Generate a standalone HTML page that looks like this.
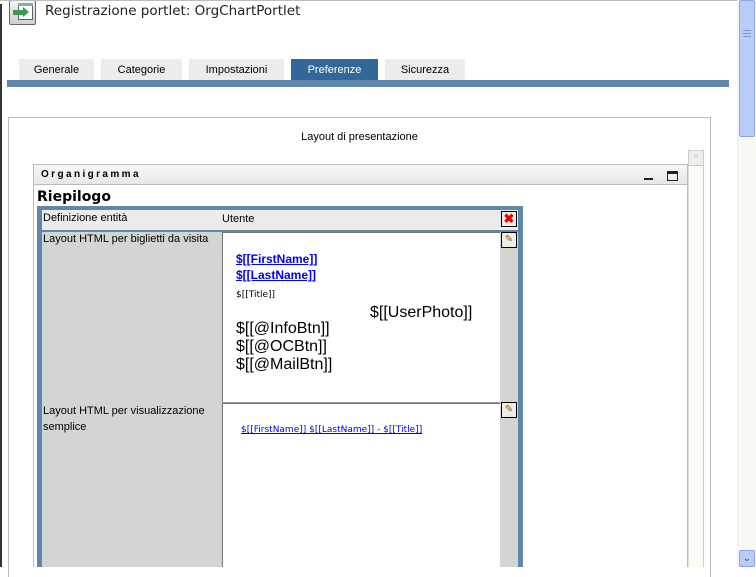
<!DOCTYPE html>
<html><head><meta charset="utf-8"><style>
*{margin:0;padding:0;box-sizing:border-box}
body{width:756px;height:567px;overflow:hidden;background:#fff;font-family:"Liberation Sans",sans-serif;position:relative}
.a{position:absolute}
.tab{position:absolute;top:59px;height:21px;background:#ececec;font-size:11px;color:#000;text-align:center;line-height:22px}
.ed{position:absolute;width:16px;height:16px;border:1px solid #000;background:#ecece8}
.lk{color:#0000ee;text-decoration:underline;font-family:"Liberation Sans",sans-serif}
.big{font-family:"Liberation Sans",sans-serif;font-size:16px;color:#000;position:absolute;line-height:18px}
</style></head><body>
<div class="a" style="left:0;top:4px;width:2px;height:563px;background:#333"></div>
<div class="a" style="left:9px;top:0;width:27px;height:25px;border:1px solid #666;border-radius:2px;background:linear-gradient(#f4f4f4,#cfcfcf)">
<div class="a" style="left:8px;top:2px;width:15px;height:17px;border:1px solid #567;background:#fff"></div>
<div class="a" style="left:8px;top:2px;width:15px;height:3px;background:#8aa"></div>
<div class="a" style="left:3px;top:9px;width:12px;height:5px;background:#3a9a4a"></div>
<div class="a" style="left:13px;top:6px;width:0;height:0;border-top:5px solid transparent;border-bottom:5px solid transparent;border-left:6px solid #3a9a4a"></div>
</div>
<div class="a" style="left:45px;top:3px;font-size:13.5px;color:#222;font-family:'DejaVu Sans',sans-serif">Registrazione portlet: OrgChartPortlet</div>
<div class="a" style="left:0;top:0;width:740px;height:1px;background:#bbb"></div>
<div class="tab" style="left:19px;width:75px">Generale</div>
<div class="tab" style="left:101px;width:81px">Categorie</div>
<div class="tab" style="left:189px;width:95px">Impostazioni</div>
<div class="tab" style="left:291px;width:87px;background:#336699;color:#fff">Preferenze</div>
<div class="tab" style="left:385px;width:80px">Sicurezza</div>
<div class="a" style="left:7px;top:80px;width:722px;height:7px;background:#5f86ab"></div>
<div class="a" style="left:737px;top:0;width:19px;height:567px;background:#f8f8f4;border-left:1px solid #eee"></div>
<div class="a" style="left:739px;top:0;width:16px;height:137px;background:#b9ccf8;border:1px solid #8aa6e6;border-radius:2px"></div>
<div class="a" style="left:743px;top:30px;width:8px;height:7px;border-top:1px solid #7d95d8;border-bottom:1px solid #7d95d8"></div>
<div class="a" style="left:743px;top:33px;width:8px;height:1px;background:#7d95d8"></div>
<div class="a" style="left:739px;top:550px;width:16px;height:17px;background:#b9ccf8;border:1px solid #8aa6e6;border-radius:2px;font-size:10px;color:#445;text-align:center;line-height:15px">&#8964;</div>
<div class="a" style="left:8px;top:117px;width:703px;height:460px;border:1px solid #bbb;border-bottom:none"></div>
<div class="a" style="left:8px;top:131px;width:703px;text-align:center;font-size:11px;color:#000">Layout di presentazione</div>
<div class="a" style="left:688px;top:150px;width:16px;height:417px;background:#fbfbf6;border-left:1px solid #ddd;border-right:1px solid #ccc"></div>
<div class="a" style="left:688px;top:150px;width:16px;height:16px;background:#eeeeea;border:1px solid #ccc;color:#bbb;font-size:9px;text-align:center;line-height:14px">^</div>
<div class="a" style="left:33px;top:164px;width:655px;height:403px;border:1px solid #bbb;border-bottom:none"></div>
<div class="a" style="left:34px;top:165px;width:653px;height:20px;background:linear-gradient(#f8f8f8,#e6e7e6);border-bottom:1px solid #bbb"></div>
<div class="a" style="left:41px;top:169px;font-size:10px;font-weight:bold;letter-spacing:2.4px;font-family:'Liberation Sans',sans-serif">Organigramma</div>
<div class="a" style="left:644px;top:178px;width:9px;height:2px;background:#222"></div>
<div class="a" style="left:667px;top:171px;width:11px;height:10px;border:1px solid #222;border-top:3px solid #222"></div>
<div class="a" style="left:37px;top:189px;font-size:14px;font-weight:bold;font-family:'DejaVu Sans',sans-serif">Riepilogo</div>
<div class="a" style="left:37px;top:206px;width:486px;height:361px;background:#5f86ab"></div>
<div class="a" style="left:42px;top:210px;width:476px;height:20px;background:#ececec"></div>
<div class="a" style="left:43px;top:212px;font-size:11px">Definizione entità</div>
<div class="a" style="left:222px;top:213px;font-size:11px">Utente</div>
<div class="ed" style="left:501px;top:211px;color:#e00;font-size:13px;font-weight:bold;text-align:center;line-height:13px">✖</div>
<div class="a" style="left:42px;top:232px;width:476px;height:335px;background:#d3d5d2"></div>
<div class="a" style="left:43px;top:233px;font-size:11px">Layout HTML per biglietti da visita</div>
<div class="a" style="left:43px;top:403px;font-size:11px;line-height:16px">Layout HTML per visualizzazione<br>semplice</div>
<div class="a" style="left:222px;top:232px;width:278px;height:170px;background:#fff;border-top:1px solid #777;border-left:1px solid #777"></div>
<div class="a" style="left:222px;top:402px;width:278px;height:2px;background:#999"></div>
<div class="a" style="left:222px;top:403px;width:278px;height:164px;background:#fff;border-top:1px solid #777;border-left:1px solid #777"></div>
<div class="ed" style="left:501px;top:232px;font-size:10px;text-align:center;line-height:14px;color:#a50">✎</div>
<div class="ed" style="left:501px;top:402px;font-size:10px;text-align:center;line-height:14px;color:#a50">✎</div>
<div class="a lk" style="left:236px;top:251px;font-size:12px;font-weight:bold;line-height:16px">$[[FirstName]]<br>$[[LastName]]</div>
<div class="a" style="left:236px;top:290px;font-size:9px;font-family:'DejaVu Sans',sans-serif">$[[Title]]</div>
<div class="big" style="left:370px;top:304px">$[[UserPhoto]]</div>
<div class="big" style="left:236px;top:320px">$[[@InfoBtn]]<br>$[[@OCBtn]]<br>$[[@MailBtn]]</div>
<div class="a lk" style="left:241px;top:425px;font-size:9px;font-family:'DejaVu Sans',sans-serif">$[[FirstName]] $[[LastName]] - $[[Title]]</div>
</body></html>
